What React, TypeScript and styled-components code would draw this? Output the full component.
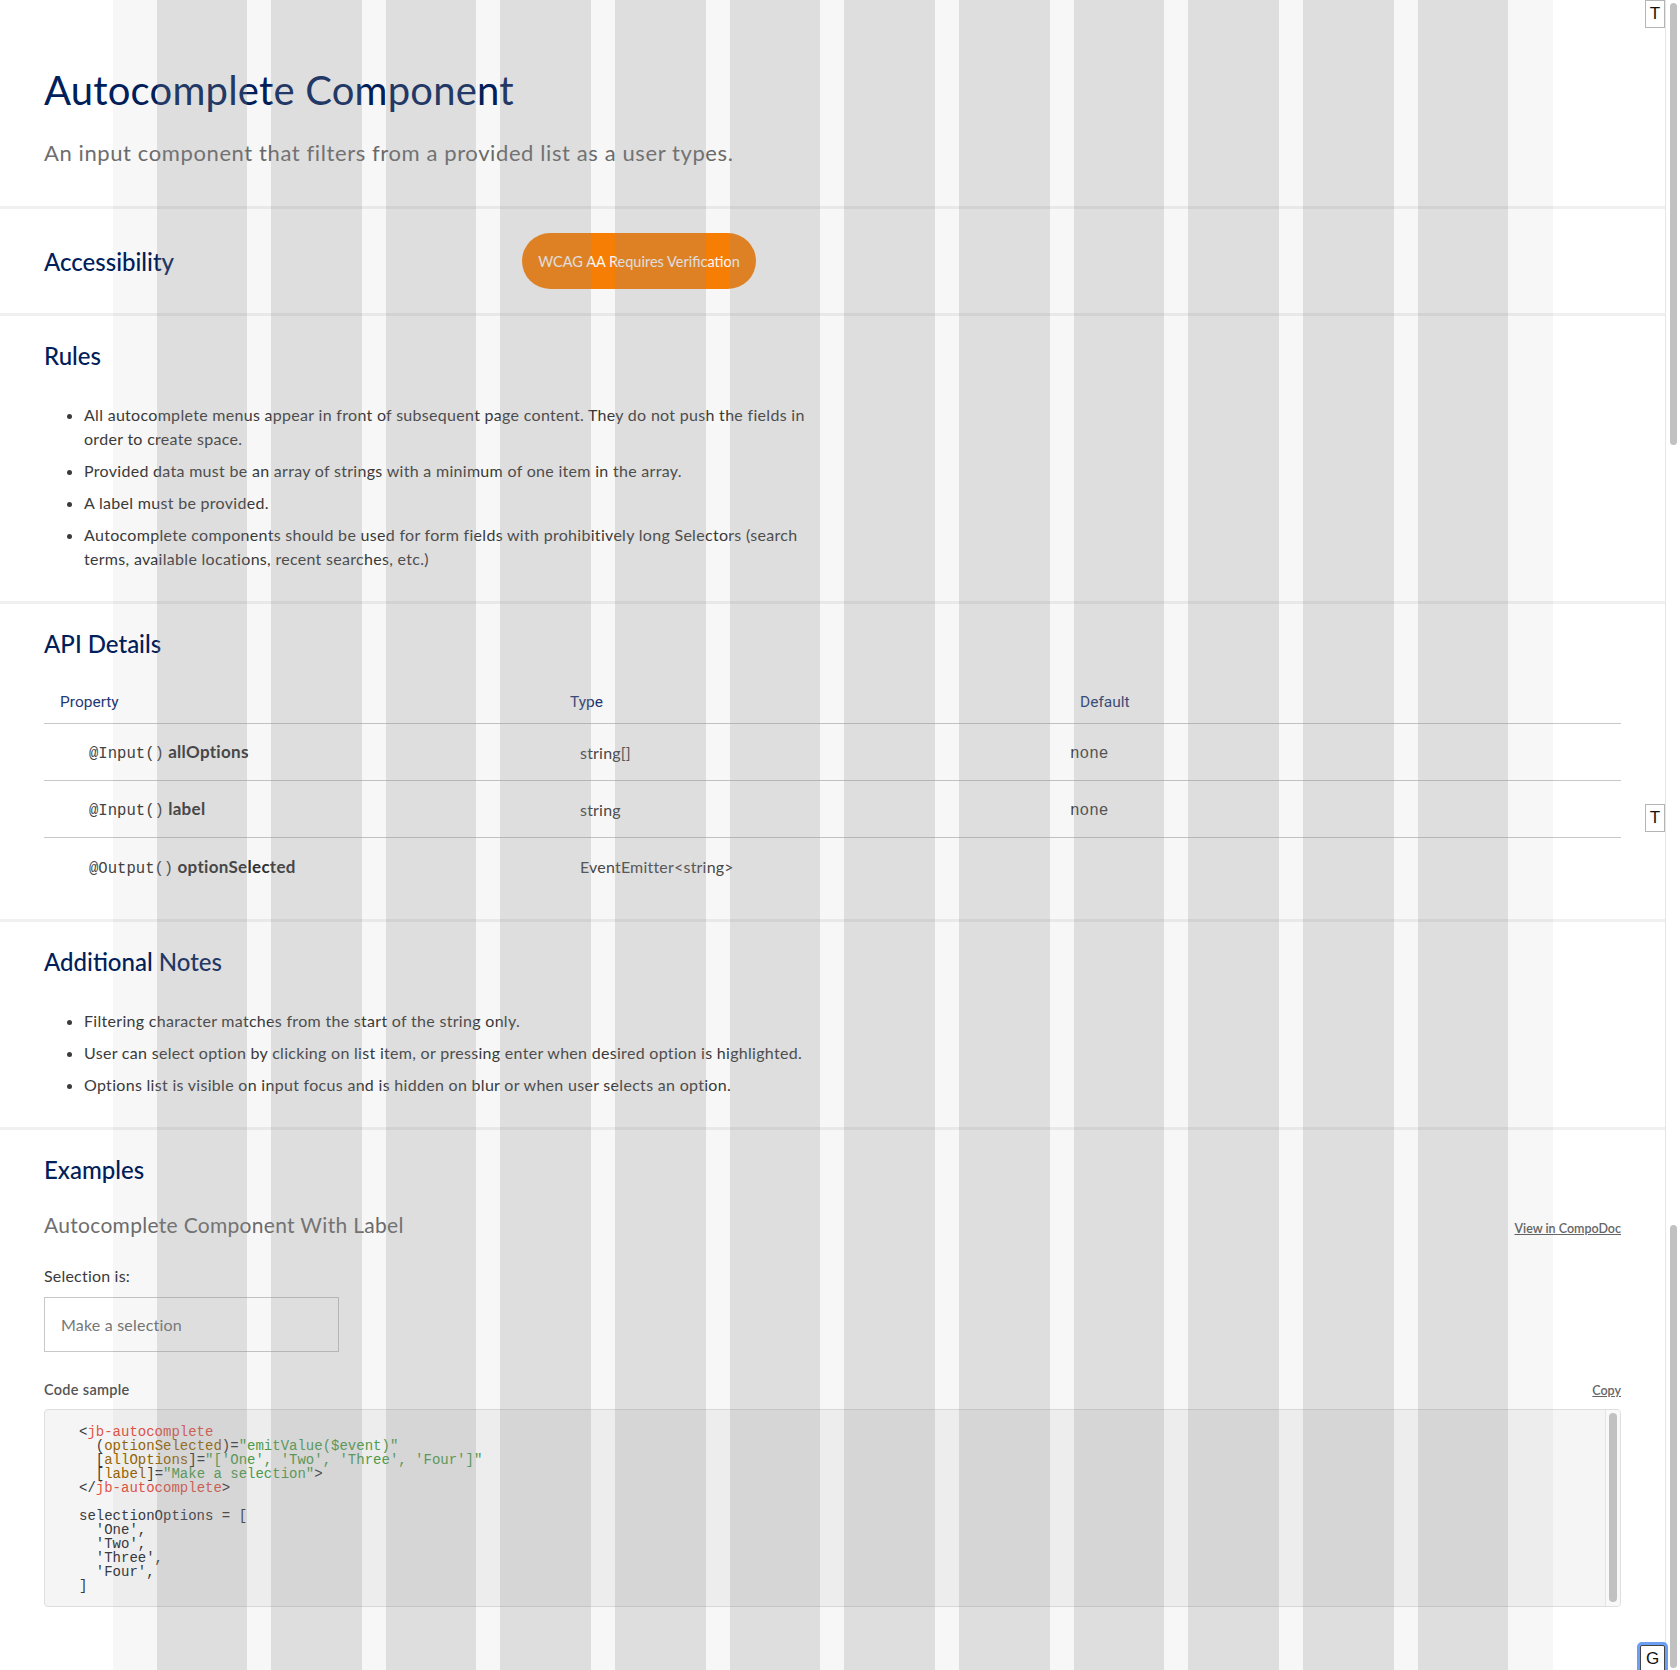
import React from 'react'
import styled, { createGlobalStyle } from 'styled-components'

const GlobalStyle = createGlobalStyle`
  html, body {
    margin: 0;
    padding: 0;
    overflow: hidden;
    background: #ffffff;
  }
  body {
    font-family: Lato, "Noto Sans", sans-serif;
    color: #3b3b3b;
  }
  * {
    box-sizing: border-box;
  }
`

const Frame = styled.div`
  display: flex;
  width: 1680px;
  height: 1670px;
  overflow: hidden;
`

const Viewport = styled.main`
  position: relative;
  flex: none;
  width: 1665px;
  height: 100%;
`

const Section = styled.section<{ $pad?: string; $last?: boolean }>`
  padding: ${p => p.$pad || '25px 44px 30px'};
  border-bottom: ${p => (p.$last ? 'none' : '3px solid #f0f0f0')};
`

const Title = styled.h1`
  margin: 0;
  font-size: 40px;
  line-height: 48px;
  font-weight: 400;
  letter-spacing: 0.2px;
  color: #00205b;
`

const Lead = styled.p`
  margin: 26px 0 0;
  font-size: 22px;
  line-height: 26px;
  letter-spacing: 0.6px;
  color: #6e6e6e;
`

const SectionTitle = styled.h2<{ $width?: number }>`
  margin: 0;
  flex: none;
  width: ${p => (p.$width ? `${p.$width}px` : 'auto')};
  font-size: 24px;
  line-height: 29px;
  font-weight: 500;
  color: #00205b;
`

const AccessRow = styled.div`
  display: flex;
  align-items: center;
`

const Badge = styled.div`
  display: flex;
  align-items: center;
  justify-content: center;
  width: 234px;
  height: 56px;
  border-radius: 28px;
  background: #ff8306;
  color: #ffffff;
  font-size: 14.5px;
`

const BulletList = styled.ul`
  margin: 33px 0 0;
  padding-left: 40px;
  max-width: 790px;
  font-size: 16px;
  line-height: 24px;
  letter-spacing: 0.3px;
  color: #3b3b3b;

  li + li {
    margin-top: 8px;
  }
`

const Table = styled.div`
  margin-top: 23px;
`

const HeadRow = styled.div`
  display: grid;
  grid-template-columns: 510px 510px 1fr;
  align-items: center;
  height: 43px;
  border-bottom: 1px solid #c8c8c8;
`

const HeadCell = styled.div`
  padding-left: 16px;
  font-family: Roboto, "Noto Sans", sans-serif;
  font-size: 15.5px;
  color: #1f3a75;
`

const BodyRow = styled.div<{ $last?: boolean }>`
  display: grid;
  grid-template-columns: 536px 490px 1fr;
  align-items: center;
  height: 57px;
  border-bottom: ${p => (p.$last ? 'none' : '1px solid #c8c8c8')};
  font-size: 16px;
  letter-spacing: 0.2px;
  color: #4a4a4a;
`

const NameCell = styled.div`
  padding-left: 45px;
`

const Decorator = styled.code`
  font-family: "Liberation Mono", monospace;
  font-size: 15.6px;
  letter-spacing: 0;
  color: #444444;
`

const PropName = styled.strong`
  font-size: 17px;
  font-weight: 700;
  letter-spacing: 0.3px;
  color: #333333;
`

const MonoValue = styled.span`
  font-family: "Liberation Mono", monospace;
  font-size: 16px;
  letter-spacing: 0;
  color: #444444;
`

const ExampleHead = styled.div`
  display: flex;
  justify-content: space-between;
  align-items: baseline;
  margin-top: 29px;
`

const ExampleTitle = styled.h3`
  margin: 0;
  font-size: 21px;
  line-height: 24px;
  font-weight: 400;
  letter-spacing: 0.3px;
  color: #6f6f6f;
`

const SmallLink = styled.a`
  font-size: 12.5px;
  font-weight: 600;
  color: #666666;
  text-decoration: underline;
`

const FieldLabel = styled.div`
  margin-top: 27px;
  font-size: 16px;
  line-height: 24px;
  letter-spacing: 0.2px;
  color: #3b3b3b;
`

const TextInput = styled.input`
  display: block;
  margin-top: 9px;
  width: 295px;
  height: 55px;
  padding: 0 16px;
  border: 1px solid #c8c8c8;
  border-radius: 0;
  background: transparent;
  font-family: Lato, "Noto Sans", sans-serif;
  font-size: 16px;
  letter-spacing: 0.2px;
  outline: none;

  &::placeholder {
    color: #777777;
  }
`

const CodeHead = styled.div`
  display: flex;
  justify-content: space-between;
  align-items: baseline;
  margin-top: 28px;
`

const CodeLabel = styled.div`
  font-size: 14.5px;
  line-height: 20px;
  font-weight: 600;
  letter-spacing: 0.3px;
  color: #555555;
`

const CodeBox = styled.div`
  display: flex;
  margin-top: 9px;
  height: 198px;
  border: 1px solid #dedede;
  border-radius: 4px;
  background: #f5f5f5;
  overflow: hidden;
`

const Pre = styled.pre`
  flex: 1;
  margin: 0;
  padding: 15px 34px 13px;
  font-family: "Liberation Mono", monospace;
  font-size: 14px;
  line-height: 14px;
  color: #383a42;
`

const Tok = styled.span<{ $k: 'tag' | 'attr' | 'str' }>`
  color: ${p => (p.$k === 'tag' ? '#e45649' : p.$k === 'attr' ? '#986801' : '#50a14f')};
`

const InnerTrack = styled.div`
  display: flex;
  flex: none;
  width: 15px;
  padding: 3px 3px 4px 3px;
  border-left: 1px solid #e4e4e4;
  background: #f8f8f8;
`

const InnerThumb = styled.div`
  flex: 1;
  border-radius: 4px;
  background: #c1c1c1;
`

const GridOverlay = styled.div`
  position: absolute;
  top: 0;
  bottom: 0;
  left: 50%;
  width: 1440px;
  margin-left: -720px;
  padding: 0 44px;
  display: grid;
  grid-template-columns: repeat(12, 1fr);
  column-gap: 24px;
  background: rgba(0, 0, 0, 0.03);
  pointer-events: none;
  z-index: 5;
`

const GridColumn = styled.div`
  background: rgba(143, 143, 143, 0.24);
`

const KeyTag = styled.div<{ $top: number }>`
  position: absolute;
  top: ${p => p.$top}px;
  right: 0;
  width: 20px;
  height: 28px;
  display: flex;
  align-items: center;
  justify-content: center;
  border: 1px solid #b5b5b5;
  background: #ffffff;
  font-family: "Liberation Sans", sans-serif;
  font-size: 17px;
  color: #111111;
  z-index: 6;
`

const FocusTag = styled.div`
  position: absolute;
  top: 1645px;
  right: 0;
  width: 25px;
  height: 28px;
  display: flex;
  align-items: center;
  justify-content: center;
  border: 1px solid #444444;
  border-radius: 2px;
  box-shadow: 0 0 0 3px #6b9ff2;
  background: #ffffff;
  font-family: "Liberation Sans", sans-serif;
  font-size: 17px;
  color: #111111;
  z-index: 6;
`

const ScrollTrack = styled.div`
  display: flex;
  flex-direction: column;
  flex: none;
  width: 15px;
  height: 100%;
  padding: 3px 3px 2px 4px;
  border-left: 1px solid #e6e6e6;
  background: #ffffff;
`

const ScrollThumb = styled.div<{ $h: number; $push?: boolean }>`
  height: ${p => p.$h}px;
  margin-top: ${p => (p.$push ? 'auto' : '0')};
  border-radius: 4px;
  background: #c1c1c1;
`

const rules = [
  'All autocomplete menus appear in front of subsequent page content. They do not push the fields in order to create space.',
  'Provided data must be an array of strings with a minimum of one item in the array.',
  'A label must be provided.',
  'Autocomplete components should be used for form fields with prohibitively long Selectors (search terms, available locations, recent searches, etc.)',
]

const notes = [
  'Filtering character matches from the start of the string only.',
  'User can select option by clicking on list item, or pressing enter when desired option is highlighted.',
  'Options list is visible on input focus and is hidden on blur or when user selects an option.',
]

const api = [
  { deco: '@Input()', name: 'allOptions', type: 'string[]', def: 'none' },
  { deco: '@Input()', name: 'label', type: 'string', def: 'none' },
  { deco: '@Output()', name: 'optionSelected', type: 'EventEmitter<string>', def: '' },
]

const App: React.FC = () => {
  return (
    <Frame>
      <GlobalStyle />
      <Viewport>
        <Section $pad="66px 44px 40px">
          <Title>Autocomplete Component</Title>
          <Lead>An input component that filters from a provided list as a user types.</Lead>
        </Section>

        <Section $pad="24px 44px 24px">
          <AccessRow>
            <SectionTitle $width={478}>Accessibility</SectionTitle>
            <Badge>WCAG AA Requires Verification</Badge>
          </AccessRow>
        </Section>

        <Section>
          <SectionTitle>Rules</SectionTitle>
          <BulletList>
            {rules.map(r => (
              <li key={r}>{r}</li>
            ))}
          </BulletList>
        </Section>

        <Section $pad="25px 44px 24px">
          <SectionTitle>API Details</SectionTitle>
          <Table>
            <HeadRow>
              <HeadCell>Property</HeadCell>
              <HeadCell>Type</HeadCell>
              <HeadCell>Default</HeadCell>
            </HeadRow>
            {api.map((row, i) => (
              <BodyRow key={row.name} $last={i === api.length - 1}>
                <NameCell>
                  <Decorator>{row.deco}</Decorator> <PropName>{row.name}</PropName>
                </NameCell>
                <div>{row.type}</div>
                <div>{row.def && <MonoValue>{row.def}</MonoValue>}</div>
              </BodyRow>
            ))}
          </Table>
        </Section>

        <Section>
          <SectionTitle>Additional Notes</SectionTitle>
          <BulletList>
            {notes.map(n => (
              <li key={n}>{n}</li>
            ))}
          </BulletList>
        </Section>

        <Section $last>
          <SectionTitle>Examples</SectionTitle>
          <ExampleHead>
            <ExampleTitle>Autocomplete Component With Label</ExampleTitle>
            <SmallLink href="#">View in CompoDoc</SmallLink>
          </ExampleHead>
          <FieldLabel>Selection is:</FieldLabel>
          <TextInput placeholder="Make a selection" />
          <CodeHead>
            <CodeLabel>Code sample</CodeLabel>
            <SmallLink href="#">Copy</SmallLink>
          </CodeHead>
          <CodeBox>
            <Pre>
              {'<'}<Tok $k="tag">jb-autocomplete</Tok>
              {'\n  ('}<Tok $k="attr">optionSelected</Tok>{')='}<Tok $k="str">"emitValue($event)"</Tok>
              {'\n  ['}<Tok $k="attr">allOptions</Tok>{']='}<Tok $k="str">"['One', 'Two', 'Three', 'Four']"</Tok>
              {'\n  ['}<Tok $k="attr">label</Tok>{']='}<Tok $k="str">"Make a selection"</Tok>{'>'}
              {'\n</'}<Tok $k="tag">jb-autocomplete</Tok>{'>'}
              {"\n\nselectionOptions = [\n  'One',\n  'Two',\n  'Three',\n  'Four',\n]"}
            </Pre>
            <InnerTrack>
              <InnerThumb />
            </InnerTrack>
          </CodeBox>
        </Section>

        <GridOverlay>
          {Array.from({ length: 12 }).map((_, i) => (
            <GridColumn key={i} />
          ))}
        </GridOverlay>

        <KeyTag $top={0}>T</KeyTag>
        <KeyTag $top={804}>T</KeyTag>
        <FocusTag>G</FocusTag>
      </Viewport>
      <ScrollTrack>
        <ScrollThumb $h={442} />
        <ScrollThumb $h={443} $push />
      </ScrollTrack>
    </Frame>
  )
}

export default App
